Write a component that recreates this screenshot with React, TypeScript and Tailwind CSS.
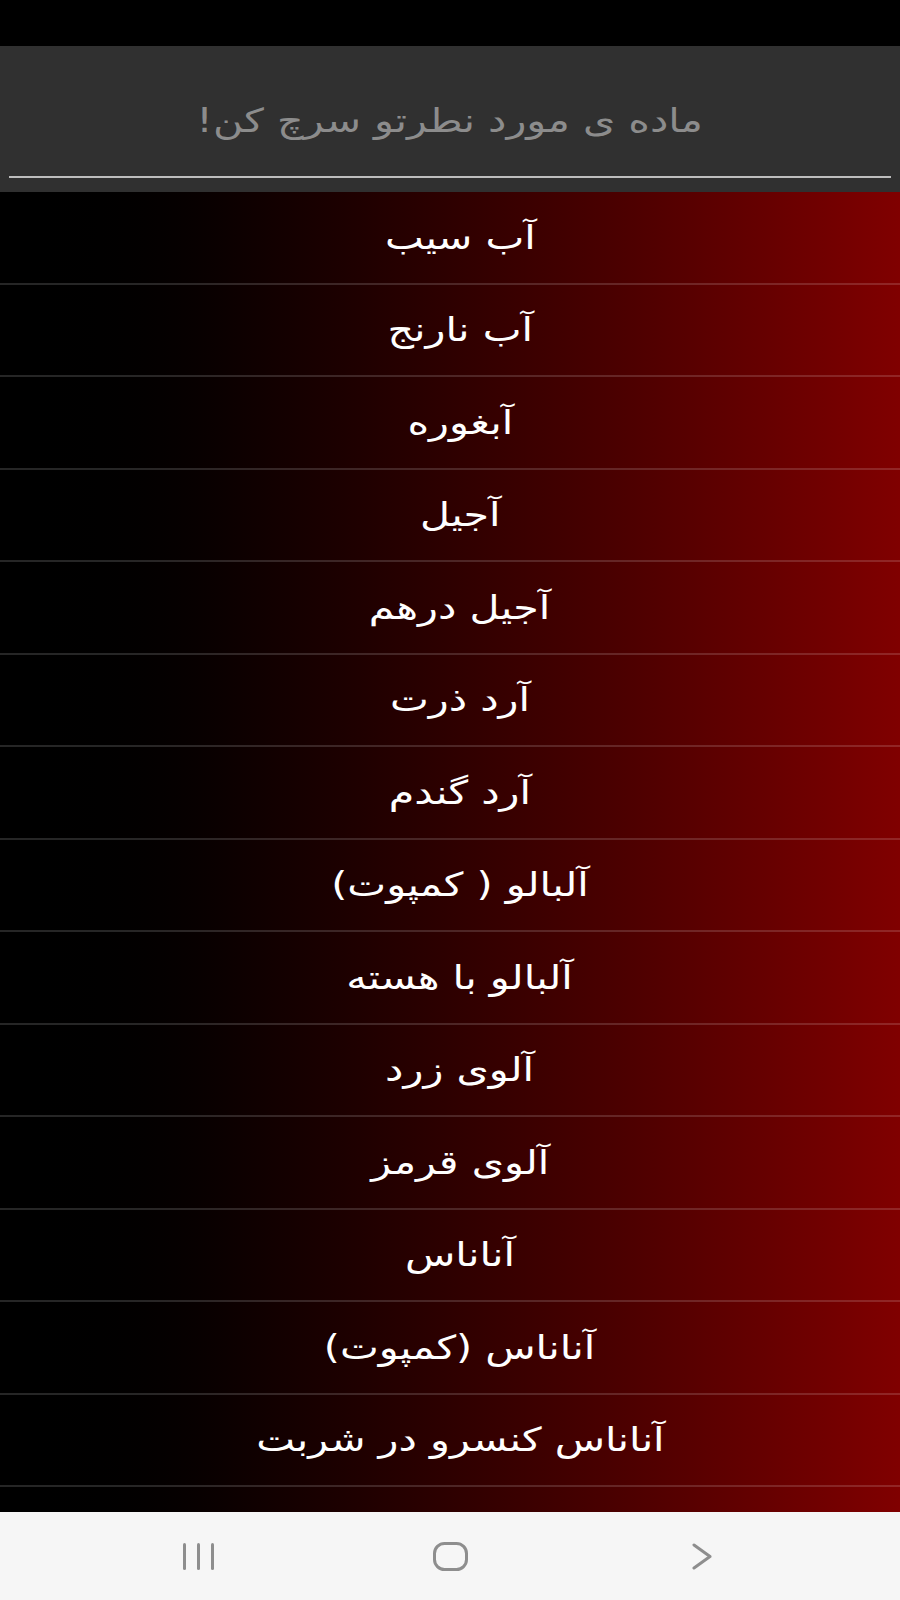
import React from "react";

const items = [
  "آب سیب",
  "آب نارنج",
  "آبغوره",
  "آجیل",
  "آجیل درهم",
  "آرد ذرت",
  "آرد گندم",
  "آلبالو ( کمپوت)",
  "آلبالو با هسته",
  "آلوی زرد",
  "آلوی قرمز",
  "آناناس",
  "آناناس (کمپوت)",
  "آناناس کنسرو در شربت",
  "",
];

export default function App() {
  return (
    <div
      className="w-[900px] h-[1600px] flex flex-col overflow-hidden bg-black"
      style={{ fontFamily: '"DejaVu Sans", "Noto Sans", sans-serif' }}
    >
      <div className="h-[46px] bg-black shrink-0" />
      <div className="h-[146px] bg-[#303030] shrink-0 flex flex-col">
        <div className="h-[130px] pt-[20px] flex items-center justify-center">
          <span dir="rtl" className="inline-block scale-x-125 text-[33px] text-[#8c8c8c]">
            ماده ی مورد نطرتو سرچ کن!
          </span>
        </div>
        <div className="h-[2px] mx-[9px] bg-[#bdbdbd]" />
      </div>
      <div className="h-[1320px] shrink-0 overflow-hidden bg-gradient-to-r from-[#000000] to-[#800000]">
        {items.map((t, i) => (
          <div
            key={i}
            className="h-[92.5px] pl-[20px] border-b-2 border-white/15 flex items-center justify-center"
          >
            <span dir="rtl" className="inline-block scale-x-125 text-[33px] text-white">
              {t}
            </span>
          </div>
        ))}
      </div>
      <div className="h-[88px] shrink-0 bg-[#f6f6f6] flex items-center justify-center gap-[192px]">
        <div className="w-[60px] flex justify-center">
          <svg width="31" height="27" viewBox="0 0 31 27" fill="none" stroke="#8e8e8e" strokeWidth="3" strokeLinecap="round">
            <line x1="1.5" y1="1.5" x2="1.5" y2="25.5" />
            <line x1="15.5" y1="1.5" x2="15.5" y2="25.5" />
            <line x1="29.5" y1="1.5" x2="29.5" y2="25.5" />
          </svg>
        </div>
        <div className="w-[60px] flex justify-center">
          <svg width="35" height="29" viewBox="0 0 35 29" fill="none" stroke="#8e8e8e" strokeWidth="3">
            <rect x="1.5" y="1.5" width="32" height="26" rx="10" />
          </svg>
        </div>
        <div className="w-[60px] flex justify-center">
          <svg width="20" height="27" viewBox="0 0 20 27" fill="none" stroke="#8e8e8e" strokeWidth="3" strokeLinecap="round" strokeLinejoin="round">
            <polyline points="2,2 18,13.5 2,25" />
          </svg>
        </div>
      </div>
    </div>
  );
}
